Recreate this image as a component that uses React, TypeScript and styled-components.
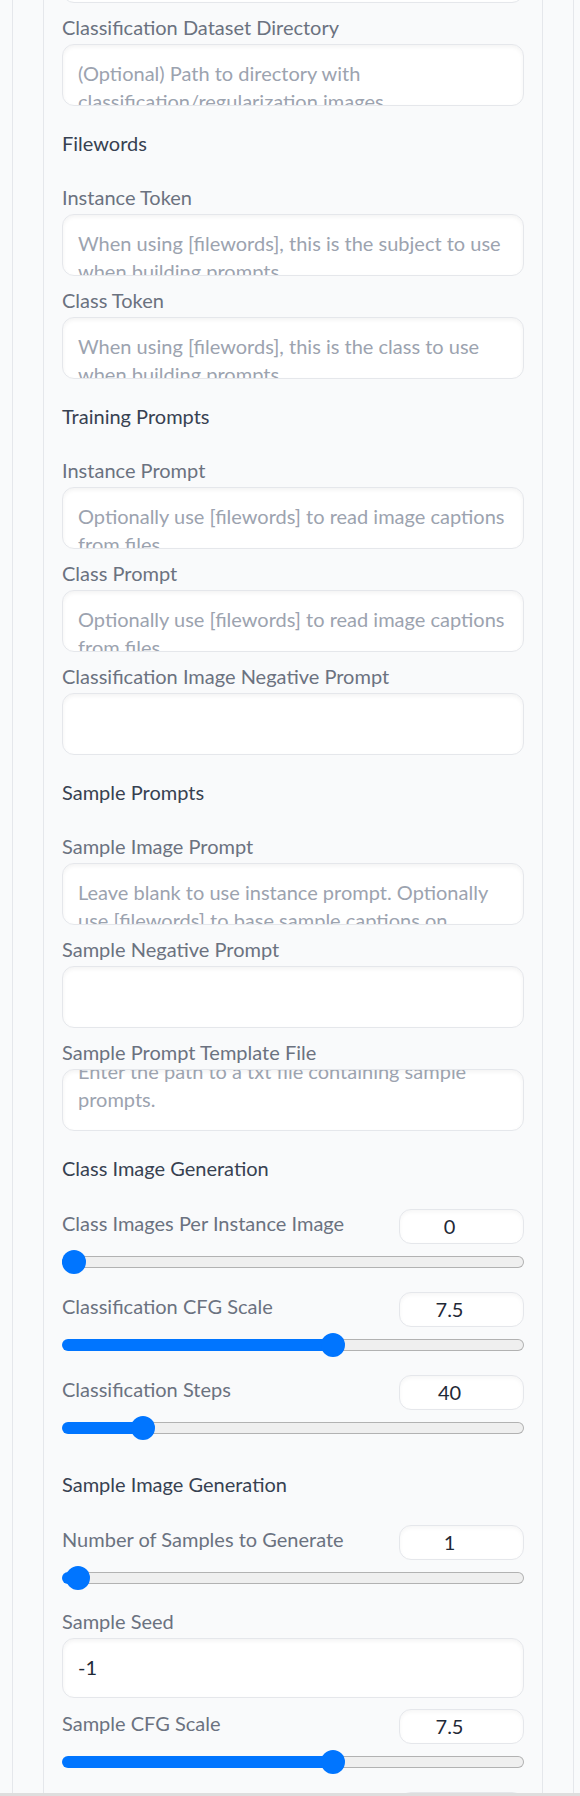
import React from "react";
import styled, { createGlobalStyle } from "styled-components";

const GlobalStyle = createGlobalStyle`
  html, body {
    margin: 0;
    padding: 0;
    height: 100%;
    overflow: hidden;
    background: #f9fafb;
  }
  body {
    font-family: Lato, "Liberation Sans", sans-serif;
    -webkit-font-smoothing: antialiased;
  }
  #root { height: 100%; }
  * { box-sizing: border-box; }
`;

const Viewport = styled.div`
  height: 100vh;
  overflow: hidden;
  padding: 0 6px 0 12px;
  background: #f9fafb;
`;

const Column = styled.div`
  margin-top: -89px;
  border-left: 1px solid #e5e7eb;
  border-right: 1px solid #e5e7eb;
  padding: 0 30px;
`;

const Panel = styled.div`
  border-left: 1px solid #e5e7eb;
  border-right: 1px solid #e5e7eb;
  padding: 0 18px;
  display: flex;
  flex-direction: column;
  gap: 11px;
`;

const Field = styled.div`
  display: flex;
  flex-direction: column;
`;

const FieldLabel = styled.span`
  display: block;
  font-size: 20px;
  line-height: 26px;
  color: #6b7280;
  margin-bottom: 4px;
  white-space: nowrap;
`;

const TextBox = styled.div<{ $height: number }>`
  height: ${(p) => p.$height}px;
  border: 1px solid #e5e7eb;
  border-radius: 12px;
  background: #ffffff;
  box-shadow: inset 0 2px 4px rgba(0, 0, 0, 0.05);
  padding: 14px 15px 15px;
  overflow: hidden;
`;

const BoxText = styled.div<{ $placeholder: boolean; $scroll: number }>`
  margin-top: ${(p) => -p.$scroll}px;
  font-size: 20px;
  line-height: 28px;
  color: ${(p) => (p.$placeholder ? "#9ca3af" : "#1f2937")};
  white-space: nowrap;
`;

const Line = styled.div`
  display: block;
`;

const SectionTitle = styled.div`
  padding: 12px 0 16px;
  font-size: 20px;
  line-height: 28px;
  color: #374151;
`;

const SliderBlock = styled.div`
  display: flex;
  flex-direction: column;
`;

const SliderHead = styled.div`
  display: flex;
  justify-content: space-between;
  align-items: flex-start;
  height: 35px;
`;

const SliderLabel = styled.span`
  font-size: 20px;
  line-height: 28px;
  color: #6b7280;
  white-space: nowrap;
`;

const NumberBox = styled.div`
  width: 125px;
  height: 35px;
  border: 1px solid #e5e7eb;
  border-radius: 12px;
  background: #ffffff;
  box-shadow: inset 0 2px 4px rgba(0, 0, 0, 0.04);
  padding-right: 24px;
  font-size: 20px;
  line-height: 33px;
  text-align: center;
  color: #1f2937;
`;

const SliderArea = styled.div`
  padding: 6px 0 7px;
`;

const Track = styled.div`
  position: relative;
  height: 24px;
  display: flex;
  align-items: center;
`;

const Rail = styled.div`
  display: flex;
  width: 100%;
  height: 12px;
`;

const RailFill = styled.div`
  height: 12px;
  background: #0075ff;
  border-radius: 6px 0 0 6px;
  flex: none;
`;

const RailRest = styled.div`
  flex: 1;
  height: 12px;
  background: #efefef;
  border: 1px solid #b2b2b2;
  border-left: none;
  border-radius: 0 6px 6px 0;
`;

const Thumb = styled.div`
  position: absolute;
  top: 0;
  width: 24px;
  height: 24px;
  border-radius: 50%;
  background: #0075ff;
`;

const BottomBar = styled.div`
  position: fixed;
  left: 0;
  right: 0;
  bottom: 0;
  height: 3px;
  background: #dedede;
`;

type Item =
  | {
      kind: "text";
      label: string;
      lines: string[];
      placeholder?: boolean;
      scroll?: number;
      height?: number;
    }
  | { kind: "title"; text: string }
  | {
      kind: "slider";
      label: string;
      value: number;
      min: number;
      max: number;
    };

const items: Item[] = [
  {
    kind: "text",
    label: "Dataset Directory",
    lines: ["Path to directory with training images"],
    placeholder: true,
  },
  {
    kind: "text",
    label: "Classification Dataset Directory",
    lines: ["(Optional) Path to directory with", "classification/regularization images"],
    placeholder: true,
  },
  { kind: "title", text: "Filewords" },
  {
    kind: "text",
    label: "Instance Token",
    lines: ["When using [filewords], this is the subject to use", "when building prompts."],
    placeholder: true,
  },
  {
    kind: "text",
    label: "Class Token",
    lines: ["When using [filewords], this is the class to use", "when building prompts."],
    placeholder: true,
  },
  { kind: "title", text: "Training Prompts" },
  {
    kind: "text",
    label: "Instance Prompt",
    lines: ["Optionally use [filewords] to read image captions", "from files."],
    placeholder: true,
  },
  {
    kind: "text",
    label: "Class Prompt",
    lines: ["Optionally use [filewords] to read image captions", "from files."],
    placeholder: true,
  },
  { kind: "text", label: "Classification Image Negative Prompt", lines: [] },
  { kind: "title", text: "Sample Prompts" },
  {
    kind: "text",
    label: "Sample Image Prompt",
    lines: [
      "Leave blank to use instance prompt. Optionally",
      "use [filewords] to base sample captions on",
      "instance images.",
    ],
    placeholder: true,
  },
  { kind: "text", label: "Sample Negative Prompt", lines: [] },
  {
    kind: "text",
    label: "Sample Prompt Template File",
    lines: ["Enter the path to a txt file containing sample", "prompts."],
    placeholder: true,
    scroll: 27,
  },
  { kind: "title", text: "Class Image Generation" },
  { kind: "slider", label: "Class Images Per Instance Image", value: 0, min: 0, max: 1000 },
  { kind: "slider", label: "Classification CFG Scale", value: 7.5, min: 1, max: 12 },
  { kind: "slider", label: "Classification Steps", value: 40, min: 10, max: 200 },
  { kind: "title", text: "Sample Image Generation" },
  { kind: "slider", label: "Number of Samples to Generate", value: 1, min: 0, max: 100 },
  { kind: "text", label: "Sample Seed", lines: ["-1"], height: 60 },
  { kind: "slider", label: "Sample CFG Scale", value: 7.5, min: 1, max: 12 },
  { kind: "slider", label: "Sample Steps", value: 40, min: 10, max: 200 },
];

function Slider({ label, value, min, max }: { label: string; value: number; min: number; max: number }) {
  const frac = Math.max(0, Math.min(1, (value - min) / (max - min)));
  return (
    <SliderBlock>
      <SliderHead>
        <SliderLabel>{label}</SliderLabel>
        <NumberBox>{value}</NumberBox>
      </SliderHead>
      <SliderArea>
        <Track>
          <Rail>
            <RailFill style={{ width: `calc(12px + ${frac} * (100% - 24px))` }} />
            <RailRest />
          </Rail>
          <Thumb style={{ left: `calc(${frac} * (100% - 24px))` }} />
        </Track>
      </SliderArea>
    </SliderBlock>
  );
}

export default function App() {
  return (
    <>
      <GlobalStyle />
      <Viewport>
        <Column>
          <Panel>
            {items.map((item, i) => {
              if (item.kind === "title") {
                return <SectionTitle key={i}>{item.text}</SectionTitle>;
              }
              if (item.kind === "slider") {
                return (
                  <Slider key={i} label={item.label} value={item.value} min={item.min} max={item.max} />
                );
              }
              return (
                <Field key={i}>
                  <FieldLabel>{item.label}</FieldLabel>
                  <TextBox $height={item.height ?? 62}>
                    <BoxText $placeholder={!!item.placeholder} $scroll={item.scroll ?? 0}>
                      {item.lines.map((l, j) => (
                        <Line key={j}>{l}</Line>
                      ))}
                    </BoxText>
                  </TextBox>
                </Field>
              );
            })}
          </Panel>
        </Column>
        <BottomBar />
      </Viewport>
    </>
  );
}
